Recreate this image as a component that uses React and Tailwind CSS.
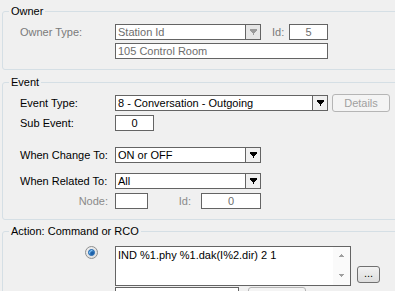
import React from 'react';

const Arrow = ({ color = '#000' }) => (
  <svg width="7" height="6" viewBox="0 0 7 6" shapeRendering="crispEdges">
    <path d="M0 0h7v2H0z M1 2h5v1H1z M2 3h3v1H2z M3 4h1v2H3z" fill={color} />
  </svg>
);

const Combo = ({ value, width, disabled }) => (
  <div className={`flex h-[16px] border border-[#646464] bg-white ${width}`}>
    <div className={`flex-1 pl-[2px] leading-[14px] whitespace-nowrap overflow-hidden ${disabled ? 'text-[#6d6d6d]' : 'text-black'}`}>
      {value}
    </div>
    <div className={`w-[15px] flex items-center justify-center border-l border-[#646464] ${disabled ? 'bg-[#e6e6e6]' : 'bg-[#f0f0f0]'}`}>
      <Arrow color={disabled ? '#9a9a9a' : '#000'} />
    </div>
  </div>
);

const Box = ({ value, width, center, gray }) => (
  <div
    className={`h-[16px] border border-[#646464] bg-white leading-[14px] whitespace-nowrap overflow-hidden ${width} ${center ? 'text-center' : 'pl-[2px]'} ${gray ? 'text-[#6d6d6d]' : 'text-black'}`}
  >
    {value}
  </div>
);

const Group = ({ title, className, children }) => (
  <div className={`relative ml-[2px] w-[400px] border border-[#d5dfe5] rounded-[3px] ${className}`}>
    <span className="absolute -top-[8px] left-[6px] px-[2px] bg-[#f0f0f0] leading-[14px]">{title}</span>
    {children}
  </div>
);

export default function App() {
  return (
    <div className="w-[395px] h-[291px] overflow-hidden bg-[#f0f0f0] pt-[11px] text-[11px] font-['Liberation_Sans',Arial,sans-serif] text-black">
      {/* Owner */}
      <Group title="Owner" className="h-[59px] pt-[12px]">
        <div className="flex items-center h-[16px]">
          <span className="w-[112px] pl-[17px] text-[#7a7a7a]">Owner Type:</span>
          <Combo value="Station Id" width="w-[146px]" disabled />
          <span className="ml-[11px] w-[17px] text-[#7a7a7a]">Id:</span>
          <Box value="5" width="w-[39px]" center gray />
        </div>
        <div className="flex mt-[3px]">
          <div className="w-[112px]" />
          <Box value="105 Control Room" width="w-[213px]" gray />
        </div>
      </Group>

      {/* Event */}
      <Group title="Event" className="mt-[12px] h-[138px] pt-[12px]">
        <div className="flex items-center h-[16px]">
          <span className="w-[112px] pl-[17px]">Event Type:</span>
          <Combo value="8 - Conversation - Outgoing" width="w-[213px]" />
          <button className="ml-[4px] w-[58px] h-[18px] -mt-[1px] mb-[-1px] rounded-[3px] border border-[#b5b5b5] bg-[#f4f4f4] text-[#a0a0a0] leading-[16px]">
            Details
          </button>
        </div>
        <div className="flex items-center h-[16px] mt-[4px]">
          <span className="w-[112px] pl-[17px]">Sub Event:</span>
          <Box value="0" width="w-[39px]" center />
        </div>
        <div className="flex items-center h-[16px] mt-[16px]">
          <span className="w-[112px] pl-[17px]">When Change To:</span>
          <Combo value="ON or OFF" width="w-[146px]" />
        </div>
        <div className="flex items-center h-[16px] mt-[10px]">
          <span className="w-[112px] pl-[17px]">When Related To:</span>
          <Combo value="All" width="w-[146px]" />
        </div>
        <div className="flex items-center h-[16px] mt-[4px]">
          <span className="w-[112px] pr-[7px] text-right text-[#8a8a8a]">Node:</span>
          <Box value="" width="w-[33px]" />
          <span className="w-[53px] pr-[10px] text-right text-[#8a8a8a]">Id:</span>
          <Box value="0" width="w-[60px]" center gray />
        </div>
      </Group>

      {/* Action */}
      <Group title="Action: Command or RCO" className="mt-[11px] h-[80px] pt-[14px]">
        <div className="flex">
          <div className="w-[112px] flex pl-[82px] pt-[0px]">
            <div className="w-[13px] h-[13px] rounded-full border border-[#8e8f8f] bg-gradient-to-br from-[#f0f0f0] to-[#dcdcdc] flex items-center justify-center">
              <div className="w-[7px] h-[7px] rounded-full bg-[#1c5fa8] border border-[#2a6fb5] shadow-[inset_1px_1px_1px_#8fd0ff]" />
            </div>
          </div>
          <div className="w-[236px] h-[40px] border border-[#646464] bg-white flex">
            <div className="flex-1 pl-[2px] pt-[1px] leading-[14px] whitespace-nowrap">IND %1.phy %1.dak(I%2.dir) 2 1</div>
            <div className="w-[17px] flex flex-col items-center justify-between py-[7px] bg-[#fafafa]">
              <svg width="7" height="4" viewBox="0 0 7 4" shapeRendering="crispEdges">
                <path d="M3 0h1v1H3z M2 1h3v1H2z M1 2h5v1H1z" fill="#a0a0a0" />
              </svg>
              <svg width="7" height="4" viewBox="0 0 7 4" shapeRendering="crispEdges">
                <path d="M1 0h5v1H1z M2 1h3v1H2z M3 2h1v1H3z" fill="#a0a0a0" />
              </svg>
            </div>
          </div>
          <button className="ml-[6px] mt-[20px] w-[23px] h-[17px] rounded-[3px] border border-[#707070] bg-gradient-to-b from-[#f2f2f2] to-[#dddddd] leading-[12px] pb-[3px]">
            ...
          </button>
        </div>
        <div className="flex mt-[1px]">
          <div className="w-[112px]" />
          <div className="w-[124px] h-[16px] border border-[#646464] bg-white" />
          <div className="ml-[9px] w-[58px] h-[18px] rounded-[3px] border border-[#b5b5b5] bg-[#f4f4f4]" />
        </div>
      </Group>
    </div>
  );
}
